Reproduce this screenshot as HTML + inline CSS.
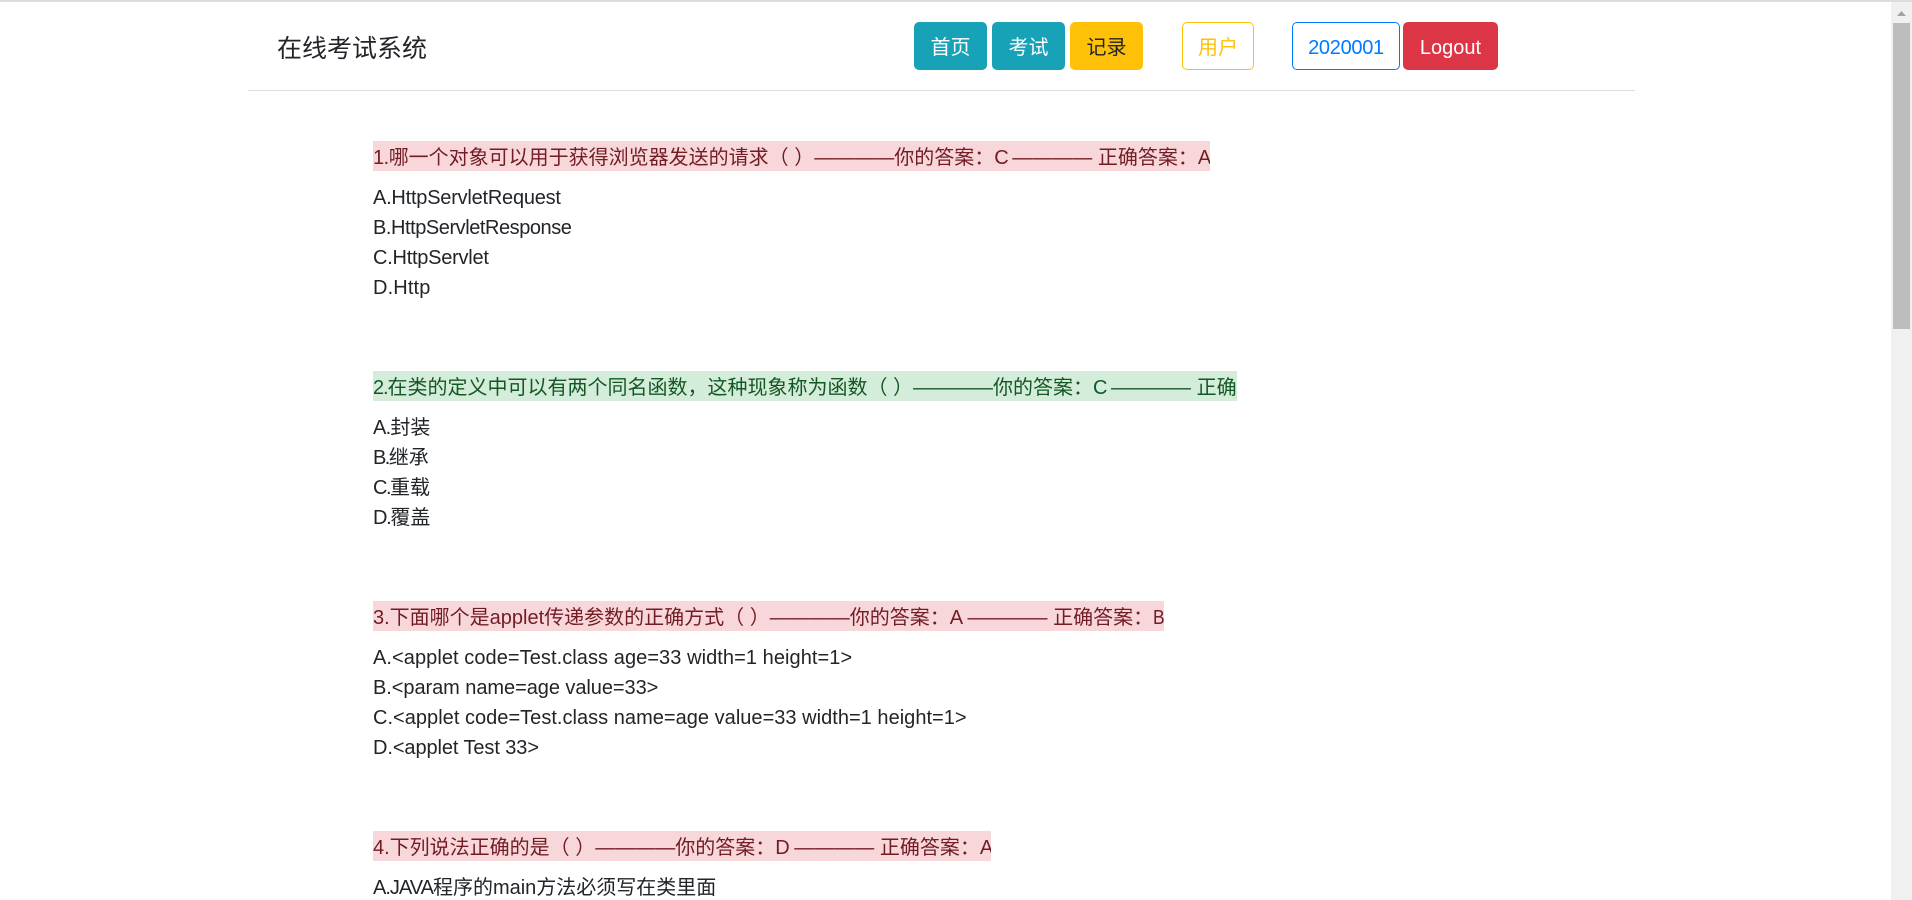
<!DOCTYPE html>
<html lang="zh">
<head>
<meta charset="utf-8">
<title>在线考试系统</title>
<style>
html,body{margin:0;padding:0;width:1912px;height:900px;overflow:hidden;background:#fff;}
body{position:relative;font-family:"Liberation Sans","Noto Sans CJK SC",sans-serif;font-size:20px;line-height:30px;color:#212529;}
.a{position:absolute;white-space:pre;}
.btn{position:absolute;top:22px;height:48px;box-sizing:border-box;border-radius:5px;line-height:50px;text-align:center;border:1.25px solid transparent;overflow:hidden;}
.q{position:absolute;left:373px;height:30px;line-height:34px;white-space:pre;overflow:hidden;}
.r{background:#f8d7da;color:#721c24;}
.g{background:#d4edda;color:#155724;}
.o{position:absolute;left:373px;height:30px;line-height:32px;white-space:pre;}
.e{display:inline-block;transform:scaleX(.87);transform-origin:left center;}
.c{letter-spacing:-2px;}
</style>
</head>
<body>
<div style="position:absolute;left:0;top:0;width:1912px;height:2px;background:#dcdce0"></div>
<div class="a" style="left:277px;top:30px;font-size:25px;line-height:38px">在线考试系统</div>
<div style="position:absolute;left:248px;top:90px;width:1387px;height:1px;background:#dfdfdf"></div>

<div class="btn" style="left:914px;width:73px;background:#17a2b8;color:#fff">首页</div>
<div class="btn" style="left:992px;width:73px;background:#17a2b8;color:#fff">考试</div>
<div class="btn" style="left:1070px;width:73px;background:#ffc107;color:#212529">记录</div>
<div class="btn" style="left:1182px;width:72px;border-color:#ffc107;color:#ffc107">用户</div>
<div class="btn" style="left:1292px;width:108px;border-color:#007bff;color:#007bff;letter-spacing:-.3px">2020001</div>
<div class="btn" style="left:1403px;width:95px;background:#dc3545;color:#fff">Logout</div>

<div class="q r" style="top:141px;width:837px"><span style="letter-spacing:-.5px">1.</span>哪一个对象可以用于获得浏览器发送的请求（ ）————你的答案：<span class="c">C</span> ———— 正确答案：A</div>
<div class="o" style="top:182px;letter-spacing:-.23px">A.HttpServletRequest</div>
<div class="o" style="top:212px;letter-spacing:-.45px">B.HttpServletResponse</div>
<div class="o" style="top:242px;letter-spacing:-.25px">C.HttpServlet</div>
<div class="o" style="top:272px;letter-spacing:.13px">D.Http</div>

<div class="q g" style="top:371px;width:864px"><span style="letter-spacing:-1.1px">2.</span>在类的定义中可以有两个同名函数，这种现象称为函数（ ）————你的答案：<span class="c">C</span> ———— 正确</div>
<div class="o" style="top:412px"><span style="letter-spacing:-.75px">A.</span>封装</div>
<div class="o" style="top:442px"><span style="letter-spacing:-1.6px">B.</span>继承</div>
<div class="o" style="top:472px"><span style="letter-spacing:-1.5px">C.</span>重载</div>
<div class="o" style="top:502px"><span style="letter-spacing:-1.3px">D.</span>覆盖</div>

<div class="q r" style="top:601px;width:791px">3.下面哪个是applet传递参数的正确方式（ ）————你的答案：A ———— 正确答案：<span class="e">B</span></div>
<div class="o" style="top:642px;letter-spacing:.066px">A.&lt;applet code=Test.class age=33 width=1 height=1&gt;</div>
<div class="o" style="top:672px;letter-spacing:-.06px">B.&lt;param name=age value=33&gt;</div>
<div class="o" style="top:702px;letter-spacing:.025px">C.&lt;applet code=Test.class name=age value=33 width=1 height=1&gt;</div>
<div class="o" style="top:732px;letter-spacing:-.09px">D.&lt;applet Test 33&gt;</div>

<div class="q r" style="top:831px;width:618px">4.下列说法正确的是（ ）————你的答案：<span style="letter-spacing:-1px">D</span> ———— 正确答案：A</div>
<div class="o" style="top:872px"><span style="letter-spacing:-1px">A.JAVA</span>程序的main方法必须写在类里面</div>

<div style="position:absolute;left:1891px;top:2px;width:21px;height:898px;background:#f0f0f0"></div>
<div style="position:absolute;left:1893px;top:23px;width:17px;height:306px;background:#bdbdbd"></div>
<svg style="position:absolute;left:1891px;top:2px" width="21" height="21"><polygon points="6,14 15,14 10.5,9" fill="#a3a3a3"/></svg>
</body>
</html>
